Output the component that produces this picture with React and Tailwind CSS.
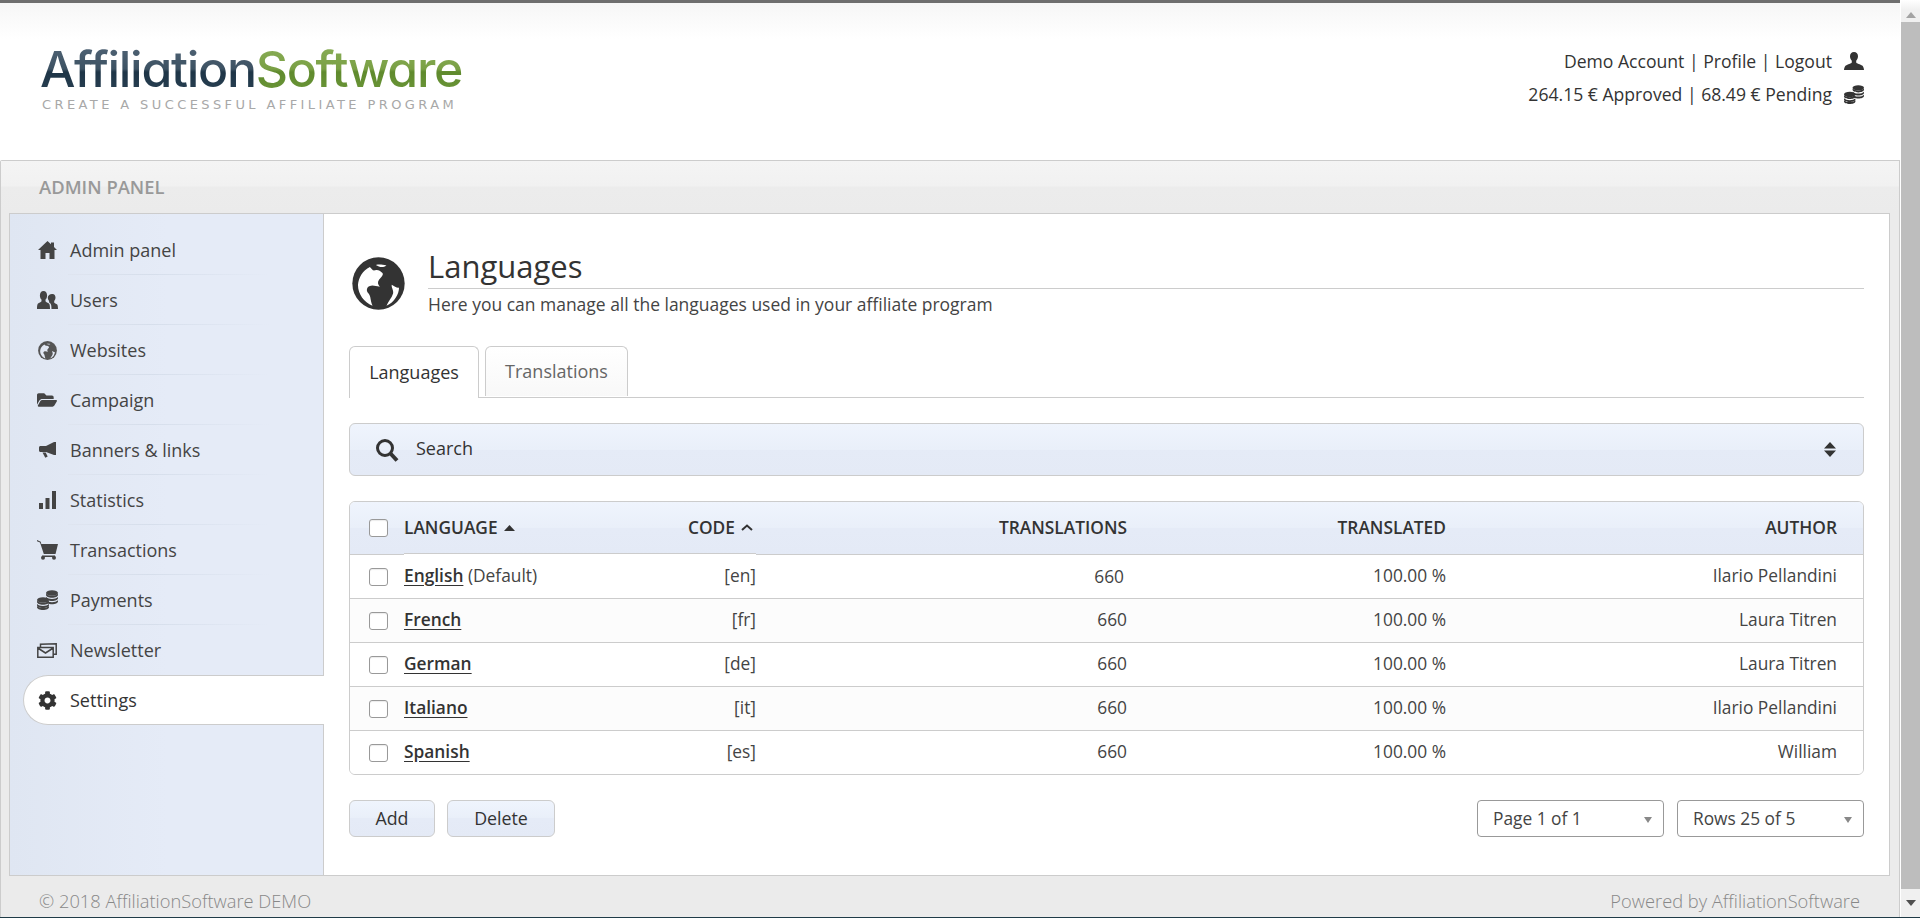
import { FaCog, FaFolderOpen } from 'react-icons/fa';

const UserIcon = () => (
    <svg width="20" height="18" viewBox="0 0 20 18" fill="currentColor">
        <path d="M10 0c2.500 0 4 1.800 4 4.300 0 1.900-.8 3.500-1.800 4.400v1.700c0 .8 4.500 1.900 6 3.100 1 .8 1.800 2.800 1.800 4.500H0c0-1.700.8-3.700 1.800-4.500 1.500-1.200 6-2.300 6-3.100V8.700C6.800 7.800 6 6.200 6 4.300 6 1.800 7.500 0 10 0z" />
    </svg>
);

const HomeIcon = () => (
    <svg width="19" height="18" viewBox="0 0 19 18" fill="currentColor">
        <path d="M9.500 0L13 3.300V1.500h3v4.600L19 9h-2.500v9h-5v-6h-4v6h-5V9H0z" />
    </svg>
);

const UsersIcon = () => (
    <svg width="21" height="18" viewBox="0 0 21 18" fill="currentColor">
        <path d="M6.500 0c2.300 0 3.600 1.900 3.600 4.400 0 1.800-.7 3.300-1.600 4.200v1.700c0 .7 2.700 1.500 3.700 2.500.7.800.8 3.500.8 5.200H0c0-1.700.1-4.400.8-5.200 1-1 3.700-1.800 3.700-2.500V8.600C3.600 7.700 2.900 6.200 2.900 4.400 2.900 1.900 4.200 0 6.500 0z" />
        <path d="M15.500 3c1.900 0 3 1.600 3 3.600 0 1.400-.6 2.600-1.300 3.300v1.500c0 .6 2.200 1.200 3 2 .6.700.8 3 .8 4.600h-6.500c0-2.100-.2-4.400-1.100-5.500-.5-.6-1.600-1.100-1.300-1.500V9.900c-.7-.7-1.300-1.900-1.300-3.300-.1-2 2.100-3.600 4.200-3.600z" />
    </svg>
);

const GlobeIcon = ({ size, color, cut }) => (
    <svg width={size} height={size} viewBox="8 8 160 160">
        <circle cx="88" cy="88" r="79" fill={color} />
        <path fill={cut} d="M62 38C40 48 28 70 26 92c0 28 18 53 44 63-8-20-4-27-12-37-8-8-6-18 2-22 12-4 18 0 32 2-6-8-8-14-2-22 6-8 14-14 10-20-8-6-12-10-22-8-8 2-10-4-16-10z" />
        <path fill={cut} d="M112 34c-14-4-24-4-32-2 10 6 20 10 32 2zM128 92c8 4 18 12 22 8 0 20-14 45-38 55 6-15 16-23 20-37 2-10-6-18-4-26z" />
    </svg>
);

const HornIcon = () => (
    <svg width="17" height="16" viewBox="0 0 17 16" fill="currentColor">
        <path d="M15 0h2v13h-2L7 10H1.500C.7 10 0 9.300 0 8.500v-3C0 4.700.7 4 1.500 4H7z" />
        <path d="M3.500 10.500h3.200l2 4-2.400 1.300z" />
    </svg>
);

const StatsIcon = () => (
    <svg width="17" height="18" viewBox="0 0 17 18" fill="currentColor">
        <rect x="0" y="12" width="4" height="6" />
        <rect x="6.500" y="7" width="4" height="11" />
        <rect x="13" y="0" width="4" height="18" />
    </svg>
);

const CartIcon = () => (
    <svg width="21" height="20" viewBox="0 0 21 20" fill="currentColor">
        <path d="M0 0l3.800 1.700.5 2.300H21l-2.500 10H6.800L3 2.500 0 1.300z" />
        <rect x="5" y="15.500" width="13" height="1.500" />
        <circle cx="6" cy="17.700" r="2" />
        <circle cx="17" cy="17.700" r="2" />
    </svg>
);

// one ring of a coin stack
const ring = (cx, y) =>
    `M${cx - 6} ${y}c1.200 1.300 3.400 2 6 2s4.800-.7 6-2v1.300c0 1.500-2.700 2.700-6 2.700s-6-1.200-6-2.700z`;

const CoinsIcon = ({ width = 21, height = 20 }) => (
    <svg width={width} height={height} viewBox="0 0 21 20" fill="currentColor">
        <ellipse cx="15" cy="3" rx="6" ry="2.800" />
        <path d={ring(15, 3.800)} />
        <path d={ring(15, 7)} />
        <path d={ring(15, 10.200)} />
        <ellipse cx="6" cy="10" rx="6" ry="2.800" />
        <path d={ring(6, 10.800)} />
        <path d={ring(6, 14)} />
        <path d={ring(6, 16)} />
    </svg>
);

const MailIcon = () => (
    <svg width="20" height="15" viewBox="0 0 20 15" fill="none" stroke="currentColor" strokeWidth="1.500">
        <path d="M.8 4.500h15.400v9.700H.8zM.8 5l7.700 5 7.700-5" />
        <path d="M3.500 4V1.200l15.700-.4v10.400h-3" />
    </svg>
);

const SearchIcon = () => (
    <svg width="24" height="24" viewBox="0 0 24 24" fill="none" stroke="currentColor">
        <circle cx="10" cy="10" r="7.500" strokeWidth="3" />
        <path d="M15.500 15.500L22 22.500" strokeWidth="4" />
    </svg>
);

const menu = [
    { label: 'Admin panel', icon: <HomeIcon /> },
    { label: 'Users', icon: <UsersIcon /> },
    { label: 'Websites', icon: <GlobeIcon size={19} color="#555" cut="#e2e8f4" /> },
    { label: 'Campaign', icon: <FaFolderOpen size={20} /> },
    { label: 'Banners & links', icon: <HornIcon /> },
    { label: 'Statistics', icon: <StatsIcon /> },
    { label: 'Transactions', icon: <CartIcon /> },
    { label: 'Payments', icon: <CoinsIcon /> },
    { label: 'Newsletter', icon: <MailIcon /> },
];

const rows = [
    { name: 'English', note: ' (Default)', code: '[en]', count: '660', author: 'Ilario Pellandini' },
    { name: 'French', code: '[fr]', count: '660', author: 'Laura Titren' },
    { name: 'German', code: '[de]', count: '660', author: 'Laura Titren' },
    { name: 'Italiano', code: '[it]', count: '660', author: 'Ilario Pellandini' },
    { name: 'Spanish', code: '[es]', count: '660', author: 'William' },
];

const Check = () => (
    <span className="block w-[19px] h-[18px] bg-white border border-[#999] rounded-[3px] shadow-[inset_0_1px_1px_rgba(0,0,0,0.08)]" />
);

const Pick = ({ label }) => (
    <div className="w-[187px] h-[37px] flex items-center justify-between pl-[15px] pr-[11px] border border-[#999] rounded-[4px] bg-white text-[#444]">
        <span>{label}</span>
        <svg width="8" height="6" viewBox="0 0 8 6" className="mt-[3px] text-[#888]" fill="currentColor"><path d="M0 0h8L4 6z" /></svg>
    </div>
);

const headCell = "bg-[linear-gradient(#eff4fd,#e9eff9_50%,#e5ebf7_50%,#e4eaf6)] font-semibold";

export default function App() {
    return (
        <div className="h-[918px] overflow-hidden flex flex-col bg-white text-[#333] text-[17.330px] font-['Open_Sans',sans-serif]">
            <div className="flex-1 min-h-0 flex">
                <div className="w-[1900px] flex flex-col">
                    <div className="h-[3px] bg-[#6e6e6e] shrink-0" />

                    <header className="h-[157px] shrink-0 flex justify-between pl-[40px] pr-[36px] bg-[linear-gradient(#f6f6f6,#ffffff_36px)]">
                        <div className="pt-[38px]">
                            <div className="text-[50px] leading-[57px] font-medium font-['Inter',sans-serif] tracking-[-1.300px] [font-feature-settings:'cv11'] whitespace-nowrap">
                                <span className="bg-[linear-gradient(#55687a,#3d5263_50%,#1e3547_55%,#2c4355)] bg-clip-text text-transparent">Affiliation</span>
                                <span className="bg-[linear-gradient(#8db15b,#7aa045_50%,#5f8a2d_55%,#6f9a3c)] bg-clip-text text-transparent">Software</span>
                            </div>
                            <div className="ml-[2px] text-[13px] leading-[14px] text-[#a8a8a8] tracking-[3.400px] font-['DejaVu_Sans',sans-serif] whitespace-nowrap">CREATE A SUCCESSFUL AFFILIATE PROGRAM</div>
                        </div>
                        <div className="pt-[46px] flex flex-col items-end gap-[9px] text-[17.600px]">
                            <div className="h-[24px] flex items-center gap-[11px]">
                                <span>Demo Account | Profile | Logout</span>
                                <span className="w-[21px] flex justify-center"><UserIcon /></span>
                            </div>
                            <div className="h-[24px] flex items-center gap-[11px]">
                                <span>264.15 € Approved | 68.49 € Pending</span>
                                <span className="w-[21px] flex justify-center"><CoinsIcon width={20} height={19} /></span>
                            </div>
                        </div>
                    </header>

                    <div className="flex-1 min-h-0 flex flex-col bg-[#ebebeb] border border-b-0 border-[#ccc] rounded-tl-[2px]">
                        <div className="h-[52px] shrink-0 flex items-center pl-[38px] text-[18.400px] font-semibold text-[#999] bg-[linear-gradient(#f4f4f4,#f1f1f1_25px,#ececec_26px,#ebebeb)]">ADMIN PANEL</div>

                        <div className="h-[663px] shrink-0 ml-[8px] mr-[9px] flex border border-[#ccc] bg-white">
                            <aside className="w-[314px] shrink-0 pt-[11px] border-r border-[#ccc] bg-[linear-gradient(90deg,#dfe6f2,#e5ebf7_50%)] text-[18px] text-[#444]">
                                {menu.map((m) => (
                                    <div key={m.label} className="h-[50px] flex flex-col">
                                        <div className={m.label !== 'Newsletter' ? "flex-1 flex items-center pl-[25px] pt-px" : "flex-1 flex items-center pl-[25px]"}>
                                            <span className="w-[24px] flex justify-center text-[#444]">{m.icon}</span>
                                            <span className="ml-[11px]">{m.label}</span>
                                        </div>
                                        {m.label !== 'Newsletter' && (
                                            <div className="h-px ml-[58px] w-[202px] bg-[linear-gradient(90deg,#dfe5f0,#d6deeb_40%,#e5ebf7)]" />
                                        )}
                                    </div>
                                ))}
                                <div className="h-[50px] ml-[13px] -mr-px flex items-center pl-[11px] bg-white border border-r-0 border-[#ccc] rounded-l-[25px] text-[#333]">
                                    <span className="w-[24px] flex justify-center"><FaCog size={19} /></span>
                                    <span className="ml-[11px]">Settings</span>
                                </div>
                            </aside>

                            <main className="flex-1 min-w-0 px-[25px] pt-[33px]">
                                <div className="flex">
                                    <div className="w-[79px] pl-[3px] pt-[10px]">
                                        <GlobeIcon size={53} color="#333" cut="#ffffff" />
                                    </div>
                                    <div className="flex-1">
                                        <h1 className="h-[42px] leading-[38px] text-[31px] border-b border-[#ccc]">Languages</h1>
                                        <p className="h-[32px] leading-[31px] text-[17.480px] text-[#444]">Here you can manage all the languages used in your affiliate program</p>
                                    </div>
                                </div>

                                <div className="mt-[25px] h-[52px] flex gap-[6px] border-b border-[#ccc] text-[18px]">
                                    <div className="w-[130px] h-[52px] flex items-center justify-center pb-px font-medium bg-white border border-b-0 border-[#ccc] rounded-t-[6px]">Languages</div>
                                    <div className="w-[143px] h-[50px] flex items-center justify-center text-[#666] bg-[linear-gradient(#ffffff,#f8f8f8)] border border-b-0 border-[#ccc] rounded-t-[6px]">Translations</div>
                                </div>

                                <div className="mt-[25px] h-[53px] flex items-center justify-between pl-[25px] pr-[27px] border border-[#ccc] rounded-[6px] bg-[linear-gradient(#eff4fd,#e9eff9_50%,#e5ebf7_50%,#e4eaf6)]">
                                    <div className="flex items-center">
                                        <SearchIcon />
                                        <span className="ml-[17px] pb-[2px] font-medium text-[18px]">Search</span>
                                    </div>
                                    <svg width="12" height="15" viewBox="0 0 12 15" fill="currentColor"><path d="M6 0l6 6.500H0zM0 8.500h12L6 15z" /></svg>
                                </div>

                                <div className="mt-[25px] border border-[#ccc] rounded-[6px] overflow-hidden">
                                    <table className="w-full table-fixed border-separate border-spacing-0">
                                        <colgroup>
                                            <col className="w-[54px]" />
                                            <col className="w-[240px]" />
                                            <col className="w-[112px]" />
                                            <col className="w-[371px]" />
                                            <col className="w-[319px]" />
                                            <col className="w-[417px]" />
                                        </colgroup>
                                        <thead>
                                            <tr>
                                                <th className={`${headCell} h-[53px] pl-[19px] border-b border-[#ccc]`}><Check /></th>
                                                <th className={`${headCell} text-left border-b border-white shadow-[inset_0_-1px_0_#ccc]`}>
                                                    LANGUAGE
                                                    <svg width="11" height="6" viewBox="0 0 11 6" className="inline ml-[6px] mb-[3px]" fill="currentColor"><path d="M5.500 0L11 6H0z" /></svg>
                                                </th>
                                                <th className={`${headCell} text-right pr-[3px] border-b border-white shadow-[inset_0_-1px_0_#ccc]`}>
                                                    CODE
                                                    <svg width="12" height="7" viewBox="0 0 12 7" className="inline ml-[6px] mb-[3px]" fill="none" stroke="currentColor" strokeWidth="2"><path d="M1 6l5-4.500L11 6" /></svg>
                                                </th>
                                                <th className={`${headCell} text-right border-b border-[#ccc]`}>TRANSLATIONS</th>
                                                <th className={`${headCell} text-right border-b border-[#ccc]`}>TRANSLATED</th>
                                                <th className={`${headCell} text-right pr-[26px] border-b border-[#ccc]`}>AUTHOR</th>
                                            </tr>
                                        </thead>
                                        <tbody className="text-[#444]">
                                            {rows.map((r, i) => {
                                                const line = i < 4 ? 'border-b border-[#ccc] h-[44px]' : 'h-[43px]';
                                                const bg = i % 2 ? 'bg-[#fcfcfc]' : 'bg-white';
                                                return (
                                                    <tr key={r.name} className={bg}>
                                                        <td className={`${line} pl-[19px]`}><Check /></td>
                                                        <td className={`${line} pb-[2px]`}>
                                                            <a className="underline underline-offset-[3px] font-semibold text-[#333]">{r.name}</a>
                                                            {r.note}
                                                        </td>
                                                        <td className={`${line} pb-[2px] text-right`}>{r.code}</td>
                                                        <td className={`${line} text-right ${i === 0 ? 'pr-[3px]' : 'pb-[2px]'}`}>{r.count}</td>
                                                        <td className={`${line} pb-[2px] text-right`}>100.00 %</td>
                                                        <td className={`${line} pb-[2px] text-right pr-[26px]`}>{r.author}</td>
                                                    </tr>
                                                );
                                            })}
                                        </tbody>
                                    </table>
                                </div>

                                <div className="mt-[25px] flex justify-between">
                                    <div className="flex gap-[12px] text-[17.800px]">
                                        <button className="w-[86px] h-[37px] font-medium border border-[#ccc] rounded-[6px] bg-[linear-gradient(#eff4fd,#e9eff9_50%,#e5ebf7_50%,#e4eaf6)]">Add</button>
                                        <button className="w-[108px] h-[37px] font-medium border border-[#ccc] rounded-[6px] bg-[linear-gradient(#eff4fd,#e9eff9_50%,#e5ebf7_50%,#e4eaf6)]">Delete</button>
                                    </div>
                                    <div className="flex gap-[13px]">
                                        <Pick label="Page 1 of 1" />
                                        <Pick label="Rows 25 of 5" />
                                    </div>
                                </div>
                            </main>
                        </div>

                        <footer className="flex-1 flex items-center justify-between pl-[38px] pr-[39px] pt-[9px] text-[18.300px] font-light text-[#888]">
                            <span>© 2018 AffiliationSoftware DEMO</span>
                            <span>Powered by AffiliationSoftware</span>
                        </footer>
                    </div>
                </div>

                <div className="w-[20px] pl-px flex flex-col">
                    <div className="h-[22px] shrink-0 flex items-end justify-center pb-[4px] bg-[linear-gradient(#ffffff,#f0f0f0_10px)]">
                        <svg width="10" height="6" viewBox="0 0 10 6" fill="#a3a3a3"><path d="M5 0l5 6H0z" /></svg>
                    </div>
                    <div className="flex-1 bg-[#bdbdbd]" />
                    <div className="h-[28px] shrink-0 flex items-center justify-center bg-[#f0f0f0]">
                        <svg width="10" height="6" viewBox="0 0 10 6" fill="#505050"><path d="M0 0h10L5 6z" /></svg>
                    </div>
                </div>
            </div>
            <div className="h-px shrink-0 bg-[#1f3b47]" />
        </div>
    );
}
